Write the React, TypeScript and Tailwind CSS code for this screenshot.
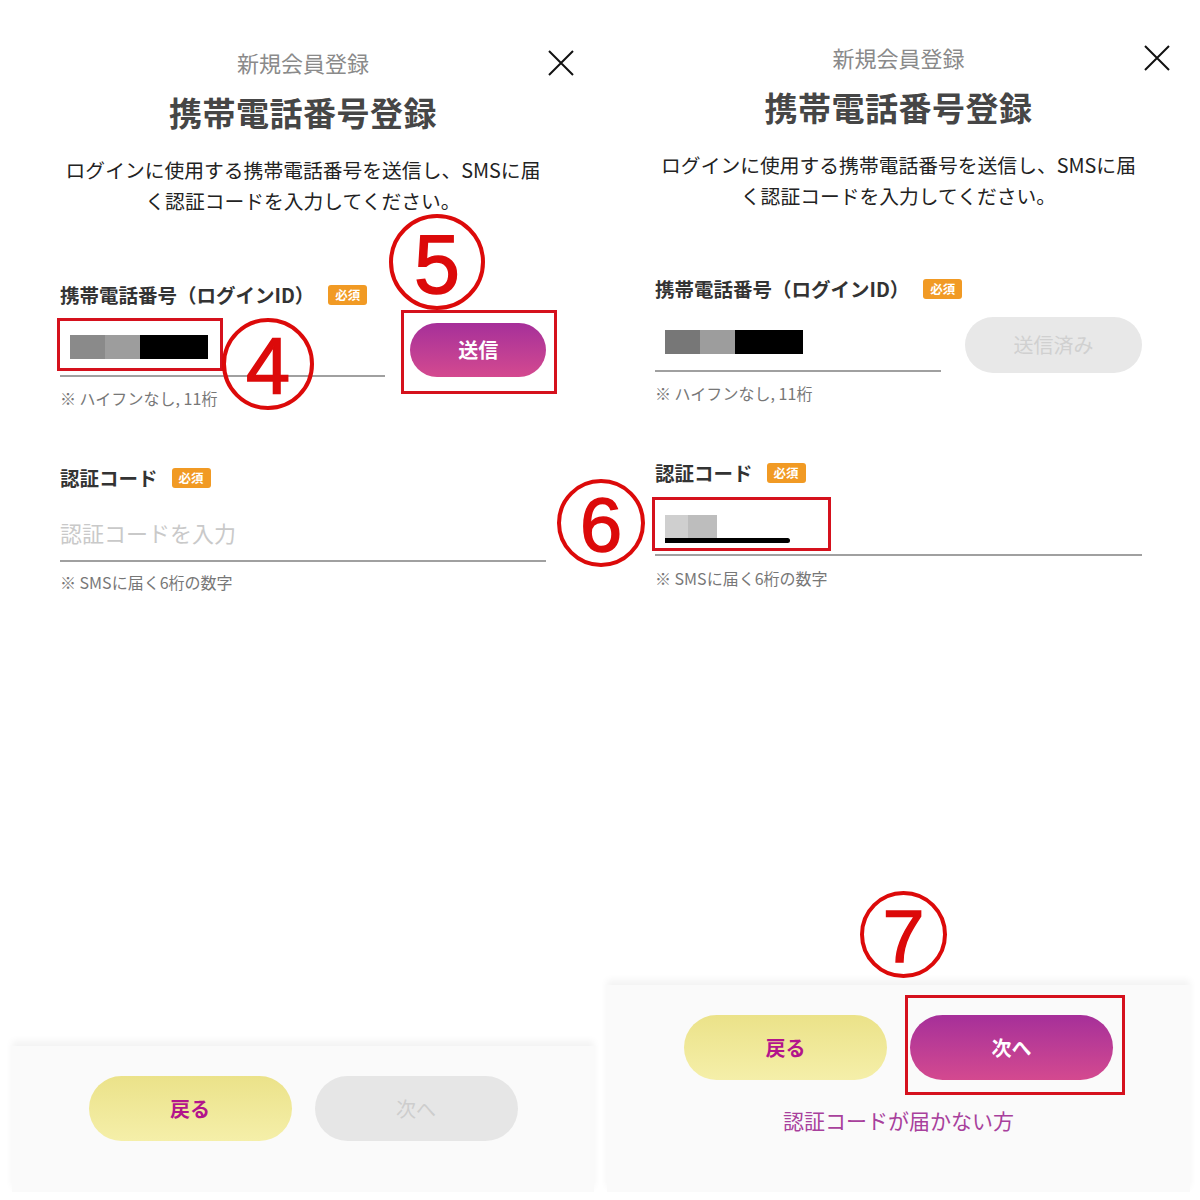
import React from "react";

function CloseIcon() {
  return (
    <svg width="26" height="26" viewBox="0 0 26 26" fill="none" stroke="#111" strokeWidth="2">
      <path d="M1 1 L25 25 M25 1 L1 25" />
    </svg>
  );
}

function Badge() {
  return (
    <span className="inline-flex items-center justify-center w-[39px] h-[20px] rounded-[3px] bg-[#f19a24] text-white text-[12.5px] font-bold leading-none">
      必須
    </span>
  );
}

function Circled({ n, x, y, d }: { n: string; x: number; y: number; d: number }) {
  return (
    <div
      className="absolute rounded-full border-[4px] border-[#dc0a0a] flex items-center justify-center text-[#dc0a0a] font-['Liberation_Sans',sans-serif] [-webkit-text-stroke:1.5px_#dc0a0a]"
      style={{ left: x, top: y, width: d, height: d, fontSize: d * 0.86, lineHeight: 1 }}
    >
      <span style={{ marginTop: d * 0.04 }}>{n}</span>
    </div>
  );
}

function RedBox({ x, y, w, h }: { x: number; y: number; w: number; h: number }) {
  return (
    <div
      className="absolute border-[3px] border-[#d5111d]"
      style={{ left: x, top: y, width: w, height: h }}
    />
  );
}

function Header() {
  return (
    <>
      <div className="relative h-[30px] flex items-center justify-center">
        <span className="text-[22px] text-[#8a8a8a] leading-[30px]">新規会員登録</span>
        <div className="absolute right-[20px] top-[3px]">
          <CloseIcon />
        </div>
      </div>
      <div className="mt-[15px] h-[40px] flex items-center justify-center text-[33px] font-bold text-[#464646] leading-[40px] tracking-[0.5px]">
        携帯電話番号登録
      </div>
      <p className="mt-[22px] text-center text-[19.8px] leading-[31px] text-[#222]">
        ログインに使用する携帯電話番号を送信し、SMSに届
        <br />
        く認証コードを入力してください。
      </p>
    </>
  );
}

function FieldLabel({ text }: { text: string }) {
  return (
    <div className="h-[26px] flex items-center gap-[14px]">
      <span className="text-[19.5px] font-bold text-[#333] leading-[26px]">{text}</span>
      <Badge />
    </div>
  );
}

function Hint({ text }: { text: string }) {
  return <div className="h-[20px] text-[16px] leading-[20px] text-[#777]">{text}</div>;
}

export default function App() {
  return (
    <div className="relative w-[1200px] h-[1200px] bg-white flex font-['Noto_Sans_CJK_JP',sans-serif] overflow-hidden">
      {/* Left screen */}
      <div className="ml-[12px] w-[582px] h-[1200px] flex flex-col">
        <div className="pt-[47px]">
          <Header />
        </div>
        <div className="px-[48px]">
          <div className="mt-[66px]">
            <FieldLabel text="携帯電話番号（ログインID）" />
          </div>
          <div className="mt-[15px] flex items-start gap-[25px]">
            <div className="w-[326px] h-[54px] border-b-[2px] border-[#a0a0a0] pt-[12px] pl-[10px] flex">
              <div className="w-[35px] h-[24px] bg-[#8a8a8a]" />
              <div className="w-[35px] h-[24px] bg-[#9d9d9d]" />
              <div className="w-[68px] h-[24px] bg-black" />
            </div>
            <button className="w-[136px] h-[54px] rounded-full bg-linear-to-b from-[#a62f99] to-[#d4498f] text-white text-[20px] font-bold">
              送信
            </button>
          </div>
          <div className="mt-[11px]">
            <Hint text="※ ハイフンなし, 11桁" />
          </div>
          <div className="mt-[57px]">
            <FieldLabel text="認証コード" />
          </div>
          <div className="mt-[13px] h-[58px] border-b-[2px] border-[#a0a0a0] flex items-center">
            <span className="text-[22px] text-[#c9c9c9] leading-[30px]">認証コードを入力</span>
          </div>
          <div className="mt-[10px]">
            <Hint text="※ SMSに届く6桁の数字" />
          </div>
        </div>
        <div className="mt-auto mb-[8px] h-[146px] bg-[#fafafa] shadow-[0_-5px_7px_rgba(0,0,0,0.05)] flex justify-center pt-[30px] gap-[23px]">
          <button className="w-[203px] h-[65px] rounded-full bg-linear-to-b from-[#ebe289] to-[#f5efa9] text-[#b3148c] text-[20px] font-bold">
            戻る
          </button>
          <button className="w-[203px] h-[65px] rounded-full bg-[#e6e6e6] text-[#cdcdcd] text-[20px]">
            次へ
          </button>
        </div>
      </div>

      {/* Right screen */}
      <div className="ml-[13px] w-[583px] h-[1200px] flex flex-col">
        <div className="pt-[42px]">
          <Header />
        </div>
        <div className="px-[48px]">
          <div className="mt-[65px]">
            <FieldLabel text="携帯電話番号（ログインID）" />
          </div>
          <div className="mt-[15px] flex items-start gap-[24px]">
            <div className="w-[286px] h-[55px] border-b-[2px] border-[#a0a0a0] pt-[13px] pl-[10px] flex">
              <div className="w-[35px] h-[24px] bg-[#777]" />
              <div className="w-[35px] h-[24px] bg-[#9d9d9d]" />
              <div className="w-[68px] h-[24px] bg-black" />
            </div>
            <button className="w-[177px] h-[56px] rounded-full bg-[#e8e8e8] text-[#d0d0d0] text-[20px]">
              送信済み
            </button>
          </div>
          <div className="mt-[10px]">
            <Hint text="※ ハイフンなし, 11桁" />
          </div>
          <div className="mt-[57px]">
            <FieldLabel text="認証コード" />
          </div>
          <div className="mt-[11px] h-[59px] border-b-[2px] border-[#a0a0a0] pt-[18px] pl-[10px]">
            <div className="flex">
              <div className="w-[23px] h-[23px] bg-[#cfcfcf]" />
              <div className="w-[29px] h-[23px] bg-[#bdbdbd]" />
            </div>
            <div className="w-[125px] h-[5px] bg-black rounded-r-full" />
          </div>
          <div className="mt-[12px]">
            <Hint text="※ SMSに届く6桁の数字" />
          </div>
        </div>
        <div className="mt-auto mb-[8px] h-[207px] bg-[#fafafa] shadow-[0_-5px_7px_rgba(0,0,0,0.05)] flex flex-col items-center pt-[30px]">
          <div className="flex gap-[23px]">
            <button className="w-[203px] h-[65px] rounded-full bg-linear-to-b from-[#ebe289] to-[#f5efa9] text-[#b3148c] text-[20px] font-bold">
              戻る
            </button>
            <button className="w-[203px] h-[65px] rounded-full bg-linear-to-b from-[#a62f99] to-[#d4498f] text-white text-[20px] font-bold">
              次へ
            </button>
          </div>
          <div className="mt-[26px] text-[21px] leading-[28px] text-[#a8409c]">認証コードが届かない方</div>
        </div>
      </div>

      {/* Annotations */}
      <RedBox x={57} y={318} w={166} h={53} />
      <RedBox x={401} y={310} w={156} h={84} />
      <RedBox x={652} y={497} w={179} h={54} />
      <RedBox x={905} y={995} w={220} h={100} />
      <Circled n="4" x={222} y={318} d={92} />
      <Circled n="5" x={389} y={214} d={96} />
      <Circled n="6" x={557} y={479} d={88} />
      <Circled n="7" x={860} y={891} d={87} />
    </div>
  );
}
